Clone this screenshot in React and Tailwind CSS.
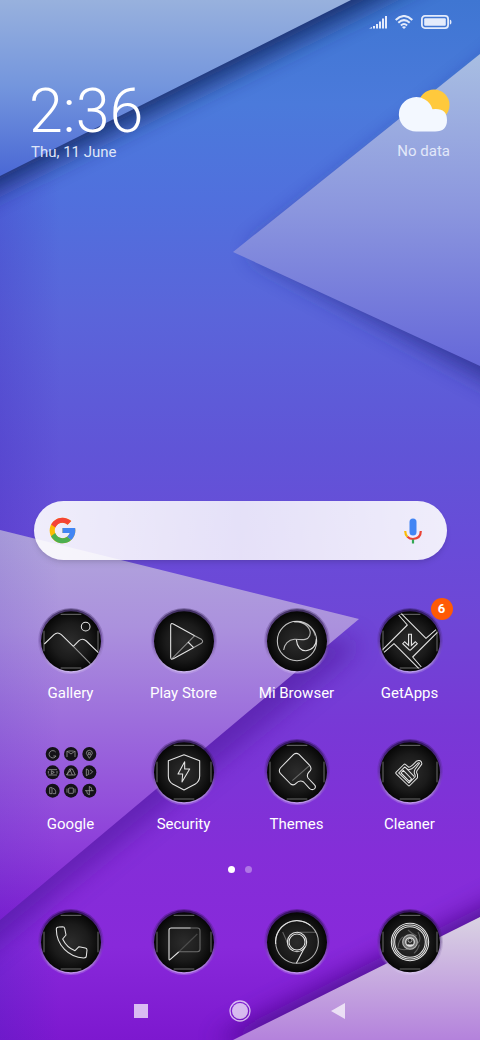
import React, { useState } from "react";

const Wallpaper = () => (
  <svg
    className="absolute inset-0 h-full w-full"
    viewBox="0 0 480 1040"
    preserveAspectRatio="none"
    aria-hidden="true"
  >
    <defs>
      <linearGradient id="sky" x1="0" y1="0" x2="0" y2="1">
        <stop offset="0" stopColor="#3f76d2" />
        <stop offset="0.1" stopColor="#4b7adb" />
        <stop offset="0.19" stopColor="#5070dd" />
        <stop offset="0.3" stopColor="#5a65da" />
        <stop offset="0.43" stopColor="#6055d7" />
        <stop offset="0.53" stopColor="#694bd8" />
        <stop offset="0.6" stopColor="#6f46d6" />
        <stop offset="0.7" stopColor="#7838d6" />
        <stop offset="0.82" stopColor="#842ed8" />
        <stop offset="0.91" stopColor="#8829da" />
        <stop offset="1" stopColor="#7d18cf" />
      </linearGradient>
      <linearGradient id="leftShade" x1="0" y1="0" x2="1" y2="0">
        <stop offset="0" stopColor="#3a1fb8" stopOpacity="0.22" />
        <stop offset="1" stopColor="#3a1fb8" stopOpacity="0" />
      </linearGradient>
      <linearGradient id="topLeft" x1="0" y1="0" x2="0" y2="1">
        <stop offset="0" stopColor="#98b1dd" />
        <stop offset="0.5" stopColor="#7395dd" />
        <stop offset="1" stopColor="#4a68d5" />
      </linearGradient>
      <linearGradient id="right" x1="0" y1="0" x2="0" y2="1">
        <stop offset="0" stopColor="#a8bee2" />
        <stop offset="0.5" stopColor="#8b96de" />
        <stop offset="1" stopColor="#6668d9" />
      </linearGradient>
      <linearGradient id="left" x1="0" y1="0" x2="0" y2="1">
        <stop offset="0" stopColor="#b2a7dc" />
        <stop offset="0.25" stopColor="#ab91dd" />
        <stop offset="0.5" stopColor="#9c6cdc" />
        <stop offset="0.78" stopColor="#8f43da" />
        <stop offset="1" stopColor="#7f20d2" />
      </linearGradient>
      <linearGradient id="corner" x1="0" y1="0" x2="0" y2="1">
        <stop offset="0" stopColor="#dad3e3" />
        <stop offset="1" stopColor="#b482dc" />
      </linearGradient>
      <filter id="soft" x="-20%" y="-20%" width="140%" height="140%">
        <feGaussianBlur stdDeviation="12" />
      </filter>
    </defs>
    <rect width="480" height="1040" fill="url(#sky)" />
    <rect width="60" height="1040" fill="url(#leftShade)" />

    <path d="M-40 -40H460L370 6L0 188L-40 208Z" fill="#142a68" opacity="0.9" filter="url(#soft)" />
    <path d="M0 0H351L0 176Z" fill="url(#topLeft)" />

    <path d="M520 40L250 252L520 398Z" fill="#262a86" opacity="0.8" filter="url(#soft)" />
    <path d="M480 54L233 252L480 366Z" fill="url(#right)" />

    <path d="M-40 620L359 640L345 660L-40 974Z" fill="#4c189a" opacity="0.55" filter="url(#soft)" />
    <path d="M0 530L359 619L0 920Z" fill="url(#left)" />
    <path d="M0 530L60 545V870L0 920Z" fill="url(#leftShade)" opacity="0.5" />

    <path d="M520 888L215 1040L520 1080Z" fill="#48098c" opacity="0.85" filter="url(#soft)" />
    <path d="M480 917L233 1040H480Z" fill="url(#corner)" />
  </svg>
);

const StatusBar = () => (
  <div className="flex h-11 items-center justify-end gap-2 pr-7 text-[#e4ebfb]">
    <svg width="18" height="14" viewBox="0 0 18 14" fill="currentColor">
      <path d="M0 13.5L3 12V13.5ZM4 11H6V13.5H4ZM7 9H9V13.5H7ZM10 6.5H12V13.5H10ZM13 3.5H15V13.5H13ZM16 1H18V13.5H16Z" />
    </svg>
    <svg width="18" height="14" viewBox="0 0 18 14" fill="none" stroke="currentColor" strokeWidth="2">
      <path d="M0.7 5Q9 -3 17.3 5M3.3 7.8Q9 2.5 14.7 7.8M5.9 10.4Q9 7.6 12.1 10.4" />
      <path d="M9 14L6.9 12Q9 10.4 11.1 12Z" fill="currentColor" stroke="none" />
    </svg>
    <svg width="31" height="14" viewBox="0 0 31 14">
      <rect x="0.9" y="0.9" width="26.2" height="12.2" rx="3" fill="none" stroke="currentColor" strokeWidth="1.8" />
      <rect x="3.2" y="3.2" width="21.6" height="7.6" rx="1" fill="currentColor" />
      <path d="M28.8 4.5Q30.5 4.5 30.5 7Q30.5 9.5 28.8 9.5Z" fill="currentColor" />
    </svg>
  </div>
);

const Weather = () => (
  <div className="mt-[9px] flex flex-col items-center text-[15px] leading-5 text-[#e2e8f9]">
    <svg width="52" height="44" viewBox="0 0 52 44">
      <circle cx="36" cy="16" r="15.5" fill="#ffc93c" />
      <path
        d="M18 42.5A17.200 17.200 0 1 1 34.500 20.200Q49 18.500 49 31Q49 42.500 37 42.500Z"
        fill="#f3f8ff"
      />
    </svg>
    <span className="mt-2">No data</span>
  </div>
);

const GoogleLogo = () => (
  <svg width="27" height="27" viewBox="3 3 42 42">
    <path fill="#fbbc05" d="M43.611 20.083H42V20H24v8h11.303c-1.649 4.657-6.080 8-11.303 8-6.627 0-12-5.373-12-12s5.373-12 12-12c3.059 0 5.842 1.154 7.961 3.039l5.657-5.657C34.046 6.053 29.268 4 24 4 12.955 4 4 12.955 4 24s8.955 20 20 20 20-8.955 20-20c0-1.341-.138-2.650-.389-3.917z" />
    <path fill="#f44336" d="M6.306 14.691l6.571 4.819C14.655 15.108 18.961 12 24 12c3.059 0 5.842 1.154 7.961 3.039l5.657-5.657C34.046 6.053 29.268 4 24 4 16.318 4 9.656 8.337 6.306 14.691z" />
    <path fill="#4caf50" d="M24 44c5.166 0 9.860-1.977 13.409-5.192l-6.190-5.238A11.910 11.910 0 0 1 24 36c-5.202 0-9.619-3.317-11.283-7.946l-6.522 5.025C9.505 39.556 16.227 44 24 44z" />
    <path fill="#4285f4" d="M43.611 20.083H42V20H24v8h11.303a12.040 12.040 0 0 1-4.087 5.571l6.193 5.238C36.971 39.205 44 34 44 24c0-1.341-.138-2.650-.389-3.917z" />
  </svg>
);

const MicIcon = () => (
  <svg width="18" height="26" viewBox="0 0 18 26" fill="none">
    <rect x="5.5" y="0.5" width="7" height="17" rx="3.5" fill="#4285f4" />
    <path d="M1.2 13Q1.2 16.5 3.4 18.8" stroke="#fbbc05" strokeWidth="2.2" />
    <path d="M3.4 18.8Q5.7 21 9 21Q16.8 20.5 16.8 13" stroke="#ea4335" strokeWidth="2.2" />
    <path d="M9 21.5V25.5" stroke="#34a853" strokeWidth="2.2" />
  </svg>
);

const SearchBar = () => {
  const [query, setQuery] = useState("");

  return (
    <form
      onSubmit={(e) => e.preventDefault()}
      className="mr-[33px] ml-[34px] flex h-[59px] items-center rounded-full bg-linear-to-r from-white/90 via-white/83 to-white/90 pr-[25px] pl-[15px] shadow-md"
    >
      <button type="button" aria-label="Google" className="cursor-pointer">
        <GoogleLogo />
      </button>
      <input
        type="text"
        aria-label="Search"
        value={query}
        onChange={(e) => setQuery(e.target.value)}
        className="h-full min-w-0 flex-1 bg-transparent px-4 text-base text-gray-700 outline-none"
      />
      <button type="button" aria-label="Voice search" className="cursor-pointer">
        <MicIcon />
      </button>
    </form>
  );
};

// glyphs are drawn around 0,0 inside a disc of radius 90
const glyphs = {
  gallery: (
    <>
      <path d="M-80 9L-51 -19Q-40 -29 -29 -19L7 16" />
      <path d="M7 16L58 68" opacity="0.6" />
      <path d="M7 16L24 -1Q35 -10 46 0L82 35" />
      <circle cx="44" cy="-43" r="13" />
    </>
  ),
  play: (
    <>
      <path d="M32 -16L-32 -51Q-40 -55 -40 -46V48Q-40 58 -32 53L28 20" />
      <path d="M32 -16L52 -5Q60 1 52 7L28 20" opacity="0.65" />
      <path d="M-36 53L32 -16" opacity="0.55" />
      <path d="M12 3L29 20" />
    </>
  ),
  browser: (
    <>
      <circle r="59" opacity="0.85" />
      <path d="M-10 -58C28 -60 45 -32 38 -16C30 2 8 -6 -8 -5C-26 -4 -38 10 -40 27" opacity="0.8" />
      <path d="M-2 -4C0 18 12 30 27 29C45 28 58 14 58 -6" />
      <path d="M-8 -57C24 -62 50 -38 54 -16" opacity="0.5" />
    </>
  ),
  getapps: (
    <>
      <path d="M-34 -78L-8 -48L-82 26" />
      <path d="M78 -34L48 -8L-26 -82" />
      <path d="M34 78L8 48L82 -26" />
      <path d="M-78 34L-48 8L26 82" />
      <path d="M0 -22V20M-20 4L0 23L20 4" strokeWidth="12" />
      <path d="M0 -19V20M-18 6L0 23L18 6" stroke="#222" strokeWidth="5" />
    </>
  ),
  security: (
    <>
      <path d="M0 -52L47 -34V12Q47 28 34 36L0 54L-34 36Q-47 28 -47 12V-34Z" />
      <path d="M2 -31L-18 6H-4L-6 30L17 -9H2Z" />
    </>
  ),
  themes: (
    <>
      <path d="M-10 -53L-50 -12Q-56 -4 -50 4L-19 36Q-10 42 -3 34Q8 22 20 30L38 50Q46 56 53 50Q58 44 52 38L33 18Q28 8 36 0Q47 -8 38 -20L6 -53Q-2 -59 -10 -53Z" />
      <path d="M-14 26L36 -18" opacity="0.35" />
    </>
  ),
  cleaner: (
    <>
      <path
        d="M-39 3L-16 -20L-4 -10Q4 -12 10 -18L22 -30Q31 -34 32 -25L18 -6Q14 2 19 8V16L-3 38Z"
        strokeWidth="10"
      />
      <path
        d="M-39 3L-16 -20L-4 -10Q4 -12 10 -18L22 -30Q31 -34 32 -25L18 -6Q14 2 19 8V16L-3 38Z"
        stroke="#222"
        strokeWidth="4"
      />
      <path d="M-27 3L-20 -5L5 21L-2 28ZM-12 -12L13 14" />
    </>
  ),
  phone: (
    <path d="M-44 -38Q-44 -45 -37 -45L-25 -46Q-20 -46 -19 -41L-15 -21L-25 -9C-18 6 -4 20 12 26L24 14L43 18Q48 19 48 24L46 42Q46 48 38 48C-6 46 -44 10 -44 -38Z" />
  ),
  messages: (
    <>
      <path d="M-16 30L-42 53Q-45 55 -45 50V-36Q-45 -42 -38 -42H20" />
      <path d="M20 -42H40Q48 -42 48 -34V22Q48 29 40 29H-16" opacity="0.4" />
      <path d="M-16 30L40 -24" opacity="0.2" />
    </>
  ),
  chrome: (
    <>
      <circle r="64" opacity="0.75" />
      <path d="M-64 6A64 64 0 0 1 40 -50" />
      <circle r="29" />
      <circle r="24" />
      <path d="M24 14L-2 64" />
      <path d="M0 -29H57M-43 -30L-26 8" opacity="0.35" />
    </>
  ),
  camera: (
    <>
      <circle r="56" />
      <circle r="51" />
      <circle r="46" />
      <circle r="17" strokeWidth="13" opacity="0.4" />
      <circle r="22" opacity="0.6" />
      <circle r="13" />
      <circle cy="-5" r="6" strokeWidth="2" />
      <path d="M-8 8Q0 12 8 8" strokeWidth="5" />
      <path d="M-38 18Q-22 26 -8 22M-36 16Q-34 -8 -20 -16M-6 -36Q4 -26 20 -18M24 -30Q36 -10 24 4M12 34Q24 24 28 8" opacity="0.3" />
    </>
  ),
};

const noFrame = ["play", "browser", "chrome"];

const AppIcon = ({ icon }) => (
  <svg className="h-[66px] w-[66px] overflow-visible" viewBox="-99 -99 198 198" aria-hidden="true">
    <defs>
      <radialGradient id={"disc-" + icon}>
        <stop offset="0" stopColor="#2c2c2c" />
        <stop offset="0.6" stopColor="#1b1b1b" />
        <stop offset="1" stopColor="#060606" />
      </radialGradient>
      <linearGradient id={"rim-" + icon} x1="0" y1="0" x2="0" y2="1">
        <stop offset="0" stopColor="#14062e" stopOpacity="0.6" />
        <stop offset="0.5" stopColor="#4a2a78" stopOpacity="0.35" />
        <stop offset="1" stopColor="#e6d8fa" stopOpacity="0.5" />
      </linearGradient>
    </defs>
    <circle r="99" fill={"url(#rim-" + icon + ")"} opacity="0.5" />
    <circle r="95" fill={"url(#rim-" + icon + ")"} />
    <circle cy="1" r="90" fill={"url(#disc-" + icon + ")"} />
    {!noFrame.includes(icon) && (
      <path d="M-31 -80H31M-31 81H31M-81 -31V31M81 -31V31" stroke="#6d6d6d" strokeWidth="3" />
    )}
    <g fill="none" stroke="#e4e4e4" strokeWidth="3.2" strokeLinejoin="round">
      {glyphs[icon]}
    </g>
  </svg>
);

const folderGlyphs = [
  "M9 -6A11 11 0 1 0 10 6H2",
  "M-12 9V-9L0 0L12 -9V9M-8 -9H8",
  "M0 13L-9 -2A9 9 0 1 1 9 -2ZM-3 -4H3V2H-3Z",
  "M-13 -8H13M-13 8H13M-13 -4V4M13 -4V4M-4 -5L5 0L-4 5Z",
  "M-4 -10H4L13 8H-13ZM-4 -10L4 8M-13 8L0 -8",
  "M-9 -10V10L-2 6V-6ZM2 -8L10 -2L2 6",
  "M-9 -9V9H-2V-9ZM0 -8Q9 -4 9 2V9H0",
  "M-12 -6V6M-6 -8H6M-6 8H6M-7 -8V8M7 -8V8M12 -6V6",
  "M0 -13V13M-13 0H13M0 -12Q8 -12 8 0M0 12Q-8 12 -8 0",
];

const FolderIcon = () => (
  <svg className="h-[66px] w-[66px]" viewBox="-99 -99 198 198" aria-hidden="true">
    {folderGlyphs.map((d, index) => (
      <g key={index} transform={`translate(${(index % 3) * 55 - 55} ${Math.floor(index / 3) * 55 - 54})`}>
        <circle r="21" fill="#141218" />
        <path d={d} fill="none" stroke="#b0b0b0" strokeWidth="2" />
      </g>
    ))}
  </svg>
);

const apps = [
  { name: "Gallery", icon: "gallery" },
  { name: "Play Store", icon: "play" },
  { name: "Mi Browser", icon: "browser" },
  { name: "GetApps", icon: "getapps", badge: 6 },
  { name: "Google", icon: "folder" },
  { name: "Security", icon: "security" },
  { name: "Themes", icon: "themes" },
  { name: "Cleaner", icon: "cleaner" },
];

const dock = [
  { name: "Phone", icon: "phone" },
  { name: "Messages", icon: "messages" },
  { name: "Chrome", icon: "chrome" },
  { name: "Camera", icon: "camera" },
];

const App = () => {
  const [page, setPage] = useState(0);

  return (
    <main className="relative min-h-screen overflow-hidden bg-[#6055d7] font-[Roboto,sans-serif]">
      <Wallpaper />
      <div className="relative flex min-h-screen flex-col">
        <StatusBar />

        <header className="flex items-start justify-between pt-9 pr-[30px] pl-[31px]">
          <div>
            <time className="-ml-0.5 block text-[61px] leading-[62px] font-light text-white">2:36</time>
            <p className="text-[15px] leading-5 text-[#dfe5f8]">Thu, 11 June</p>
          </div>
          <Weather />
        </header>

        <div className="mt-auto pt-12">
          <SearchBar />
        </div>

        <section className="mt-12 grid grid-cols-4 gap-y-9 px-[14px]">
          {apps.map((app) => (
            <button key={app.name} type="button" className="flex cursor-pointer flex-col items-center">
              <span className="relative">
                {app.icon === "folder" ? <FolderIcon /> : <AppIcon icon={app.icon} />}
                {app.badge && (
                  <span className="absolute -top-2.5 -right-2.5 flex h-[22px] w-[22px] items-center justify-center rounded-full bg-[#ff5a05] text-[13px] font-bold text-white">
                    {app.badge}
                  </span>
                )}
              </span>
              <span className="mt-[9px] text-[15px] leading-5 whitespace-nowrap text-white">{app.name}</span>
            </button>
          ))}
        </section>

        <div className="mt-8 flex justify-center gap-2.5">
          {[0, 1].map((dot) => (
            <button
              key={dot}
              type="button"
              aria-label={"Page " + (dot + 1)}
              onClick={() => setPage(dot)}
              className={`h-[7px] w-[7px] rounded-full ${page === dot ? "bg-white" : "bg-white/35"}`}
            />
          ))}
        </div>

        <section className="mt-9 grid grid-cols-4 px-[14px]">
          {dock.map((app) => (
            <button
              key={app.name}
              type="button"
              aria-label={app.name}
              className="flex cursor-pointer justify-center"
            >
              <AppIcon icon={app.icon} />
            </button>
          ))}
        </section>

        <nav className="mt-[7px] flex h-[58px] items-center justify-center gap-[75px] text-white/70">
          <button type="button" aria-label="Recent apps" className="cursor-pointer">
            <svg width="24" height="24" viewBox="0 0 24 24" fill="currentColor">
              <rect x="5" y="5" width="14" height="14" />
            </svg>
          </button>
          <button type="button" aria-label="Home" className="cursor-pointer">
            <svg width="24" height="24" viewBox="0 0 24 24" fill="currentColor">
              <circle cx="12" cy="12" r="8" />
              <circle cx="12" cy="12" r="10" fill="none" stroke="currentColor" strokeWidth="1.3" />
            </svg>
          </button>
          <button type="button" aria-label="Back" className="cursor-pointer">
            <svg width="24" height="24" viewBox="0 0 24 24" fill="currentColor">
              <path d="M4 12L18 4V20Z" />
            </svg>
          </button>
        </nav>
      </div>
    </main>
  );
};

export default App;
